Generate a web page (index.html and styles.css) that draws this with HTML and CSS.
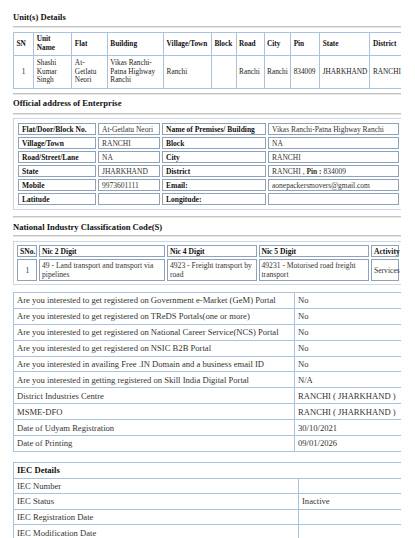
FILE: index.html
```html
<!DOCTYPE html>
<html>
<head>
<meta charset="utf-8">
<link rel="stylesheet" href="styles.css">
</head>
<body>
<div class="page">
  <h2 class="sec-title">Unit(s) Details</h2>
  <hr class="rule m4">
  <table class="unit m4">
    <colgroup>
      <col style="width:20px"><col style="width:37.7px"><col style="width:35px"><col style="width:55.7px"><col style="width:47.3px"><col style="width:24.3px"><col style="width:27.7px"><col style="width:26.3px"><col style="width:28.7px"><col style="width:49.7px"><col style="width:42px">
    </colgroup>
    <tr class="head">
      <th>SN</th><th>Unit Name</th><th>Flat</th><th>Building</th><th>Village/Town</th><th>Block</th><th>Road</th><th>City</th><th>Pin</th><th>State</th><th>District</th>
    </tr>
    <tr class="body">
      <td class="c">1</td><td>Shashi Kumar Singh</td><td>At-Getlatu Neori</td><td>Vikas Ranchi-Patna Highway Ranchi</td><td>Ranchi</td><td></td><td>Ranchi</td><td>Ranchi</td><td>834009</td><td>JHARKHAND</td><td>RANCHI</td>
    </tr>
  </table>
  <hr class="rule m4">
  <h2 class="sec-title t3">Official address of Enterprise</h2>
  <hr class="rule m45">
  <div class="box addr-box">
    <table class="addr">
      <colgroup>
        <col style="width:78px"><col style="width:62px"><col style="width:104px"><col style="width:131px">
      </colgroup>
      <tr><th>Flat/Door/Block No.</th><td>At-Getlatu Neori</td><th>Name of Premises/ Building</th><td>Vikas Ranchi-Patna Highway Ranchi</td></tr>
      <tr><th>Village/Town</th><td>RANCHI</td><th>Block</th><td>NA</td></tr>
      <tr><th>Road/Street/Lane</th><td>NA</td><th>City</th><td>RANCHI</td></tr>
      <tr><th>State</th><td>JHARKHAND</td><th>District</th><td>RANCHI , <b>Pin :</b> 834009</td></tr>
      <tr><th>Mobile</th><td>9973601111</td><th>Email:</th><td>aonepackersmovers@gmail.com</td></tr>
      <tr><th>Latitude</th><td></td><th>Longitude:</th><td></td></tr>
    </table>
  </div>
  <hr class="rule m6">
  <h2 class="sec-title t4">National Industry Classification Code(S)</h2>
  <hr class="rule m3">
  <div class="box nic-box">
    <table class="nic">
      <colgroup>
        <col style="width:20px"><col style="width:126px"><col style="width:89.5px"><col style="width:110.5px"><col style="width:28px">
      </colgroup>
      <tr class="head"><th>SNo.</th><th>Nic 2 Digit</th><th>Nic 4 Digit</th><th>Nic 5 Digit</th><th>Activity</th></tr>
      <tr class="body"><td class="c">1</td><td>49 - Land transport and transport via pipelines</td><td>4923 - Freight transport by road</td><td>49231 - Motorised road freight transport</td><td>Services</td></tr>
    </table>
  </div>
  <table class="info">
    <colgroup><col style="width:281px"><col style="width:115px"></colgroup>
    <tr><td>Are you interested to get registered on Government e-Market (GeM) Portal</td><td>No</td></tr>
    <tr><td>Are you interested to get registered on TReDS Portals(one or more)</td><td>No</td></tr>
    <tr><td>Are you interested to get registered on National Career Service(NCS) Portal</td><td>No</td></tr>
    <tr><td>Are you interested to get registered on NSIC B2B Portal</td><td>No</td></tr>
    <tr><td>Are you interested in availing Free .IN Domain and a business email ID</td><td>No</td></tr>
    <tr><td>Are you interested in getting registered on Skill India Digital Portal</td><td>N/A</td></tr>
    <tr><td>District Industries Centre</td><td>RANCHI ( JHARKHAND )</td></tr>
    <tr><td>MSME-DFO</td><td>RANCHI ( JHARKHAND )</td></tr>
    <tr><td>Date of Udyam Registration</td><td>30/10/2021</td></tr>
    <tr><td>Date of Printing</td><td>09/01/2026</td></tr>
  </table>
  <table class="iec">
    <colgroup><col style="width:285px"><col style="width:115px"></colgroup>
    <tr><th colspan="2">IEC Details</th></tr>
    <tr><td>IEC Number</td><td></td></tr>
    <tr><td>IEC Status</td><td>Inactive</td></tr>
    <tr><td>IEC Registration Date</td><td></td></tr>
    <tr><td>IEC Modification Date</td><td></td></tr>
  </table>
</div>
</body>
</html>
```

FILE: styles.css
```css
html, body {
  margin: 0;
  padding: 0;
  background: #ffffff;
}

body {
  font-family: "Liberation Serif", "Times New Roman", serif;
  color: #222;
}

.page {
  margin-left: 13px;
  width: 388px;
  overflow: hidden;
  padding-top: 12px;
  display: flex;
  flex-direction: column;
  align-items: flex-start;
}

.sec-title {
  margin: 0;
  font-size: 8.6px;
  line-height: 10px;
  font-weight: bold;
  color: #111;
  white-space: nowrap;
}

.sec-title.t3 { margin-top: 3px; }
.sec-title.t4 { margin-top: 4px; }

.rule {
  align-self: stretch;
  width: 100%;
  height: 0;
  margin: 0;
  border: 0;
  border-top: 1px solid #c4c4c4;
  border-bottom: 1px solid #e6e6e6;
}

.m4 { margin-top: 4px; }
.m45 { margin-top: 4.5px; }
.m6 { margin-top: 6px; }
.m3 { margin-top: 3px; }

table {
  border-collapse: collapse;
  table-layout: fixed;
  flex-shrink: 0;
}

/* Unit table */
.unit {
  width: 400px;
  font-size: 7.3px;
  line-height: 8.8px;
  border: 1px solid #a9c3de;
}

.unit th, .unit td {
  border: 1px solid #a9c3de;
  padding: 0 2.5px;
  text-align: left;
  vertical-align: middle;
}

.unit th {
  font-weight: bold;
  color: #111;
}

.unit .head { height: 23px; }
.unit .body { height: 33px; }
.unit .c { text-align: center; }

/* Boxes */
.box {
  flex-shrink: 0;
  border: 1px solid #cbd6e2;
}

.addr-box {
  margin-top: 3.5px;
  padding: 2px;
  width: 400px;
}

.nic-box {
  margin-top: 4px;
  padding: 1px;
  width: 400px;
}

.addr, .nic {
  border-collapse: separate;
  border-spacing: 2px;
}

.addr {
  width: 385px;
  font-size: 7.5px;
  line-height: 9px;
}

.addr tr { height: 12px; }

.addr th, .addr td {
  height: 10px;
  border: 1px solid #8ea2b9;
  padding: 0 3px;
  text-align: left;
  vertical-align: middle;
  white-space: nowrap;
  overflow: hidden;
}

.addr th { font-weight: bold; color: #111; }
.addr td { color: #333; }

.nic {
  width: 386px;
  font-size: 7.6px;
  line-height: 9px;
}

.nic th, .nic td {
  border: 1px solid #8ea2b9;
  padding: 0 1px 0 2px;
  text-align: left;
  vertical-align: middle;
}

.nic th { font-weight: bold; color: #111; white-space: nowrap; }
.nic .head th { height: 10px; }
.nic .body td { height: 20px; color: #333; }
.nic .c { text-align: center; }

/* Info table */
.info, .iec {
  font-size: 8.6px;
  line-height: 10px;
  color: #333;
}

.info {
  margin-top: 7px;
  width: 396px;
  border: 1px solid #a9c3de;
}

.info td {
  height: 14.9px;
  border: 1px solid #a9c3de;
  padding: 0 3px;
  vertical-align: middle;
  white-space: nowrap;
}

.iec {
  margin-top: 10px;
  width: 400px;
  border: 1px solid #a9c3de;
}

.iec th, .iec td {
  height: 14.6px;
  border: 1px solid #a9c3de;
  padding: 0 3px;
  text-align: left;
  vertical-align: middle;
  white-space: nowrap;
}

.iec th { font-weight: bold; color: #111; }
```
